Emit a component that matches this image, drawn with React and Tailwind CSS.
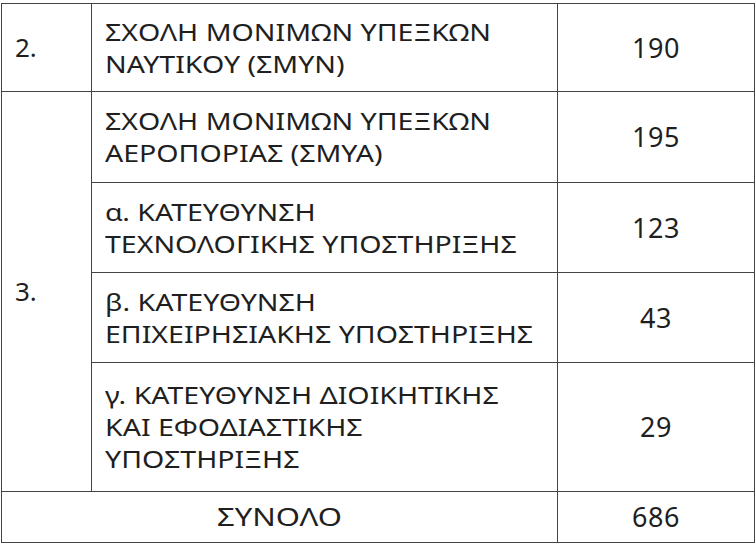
const rows = [
  { lines: ["ΣΧΟΛΗ ΜΟΝΙΜΩΝ ΥΠΕΞΚΩΝ", "ΝΑΥΤΙΚΟΥ (ΣΜΥΝ)"], value: "190", h: "h-[88px]" },
  { lines: ["ΣΧΟΛΗ ΜΟΝΙΜΩΝ ΥΠΕΞΚΩΝ", "ΑΕΡΟΠΟΡΙΑΣ (ΣΜΥΑ)"], value: "195", h: "h-[91px]" },
  { lines: ["α. ΚΑΤΕΥΘΥΝΣΗ", "ΤΕΧΝΟΛΟΓΙΚΗΣ ΥΠΟΣΤΗΡΙΞΗΣ"], value: "123", h: "h-[90px]" },
  { lines: ["β. ΚΑΤΕΥΘΥΝΣΗ", "ΕΠΙΧΕΙΡΗΣΙΑΚΗΣ ΥΠΟΣΤΗΡΙΞΗΣ"], value: "43", h: "h-[90px]" },
  {
    lines: ["γ. ΚΑΤΕΥΘΥΝΣΗ ΔΙΟΙΚΗΤΙΚΗΣ", "ΚΑΙ ΕΦΟΔΙΑΣΤΙΚΗΣ", "ΥΠΟΣΤΗΡΙΞΗΣ"],
    value: "29",
    h: "h-[129px]",
  },
];

const cell = "border-[1.5px] border-[#444]";

// the source print is a little wide, so the lines get a horizontal stretch
const Text = ({ lines }) => (
  <td className={`${cell} px-[13px] align-middle text-left text-[23px] leading-[32px] whitespace-nowrap`}>
    {lines.map((l, i) => (
      <div key={i} className="origin-left scale-x-[1.24]">
        {l}
      </div>
    ))}
  </td>
);

const Num = ({ value }) => (
  <td className={`${cell} text-center align-middle text-[27px] leading-[34px] tracking-[0.5px]`}>{value}</td>
);

export default function App() {
  return (
    <div
      className="w-[756px] h-[548px] bg-white pl-[1px] pt-[3px] text-[#1f1f1f] font-normal"
      style={{ fontFamily: '"Noto Sans", "Open Sans", sans-serif' }}
    >
      <table className="w-[754px] border-collapse table-fixed">
        <colgroup>
          <col className="w-[90px]" />
          <col className="w-[466px]" />
          <col />
        </colgroup>
        <tbody>
          <tr className={rows[0].h}>
            <td className={`${cell} pl-[13px] align-middle text-[26px]`}>2.</td>
            <Text lines={rows[0].lines} />
            <Num value={rows[0].value} />
          </tr>
          {rows.slice(1).map((r, i) => (
            <tr key={i} className={r.h}>
              {i === 0 && (
                <td rowSpan={4} className={`${cell} pl-[13px] align-middle text-[26px]`}>
                  3.
                </td>
              )}
              <Text lines={r.lines} />
              <Num value={r.value} />
            </tr>
          ))}
          {/* total */}
          <tr className="h-[51px]">
            <td colSpan={2} className={`${cell} text-center align-middle text-[25px]`}>
              <div className="scale-x-[1.24]">ΣΥΝΟΛΟ</div>
            </td>
            <Num value="686" />
          </tr>
        </tbody>
      </table>
    </div>
  );
}
